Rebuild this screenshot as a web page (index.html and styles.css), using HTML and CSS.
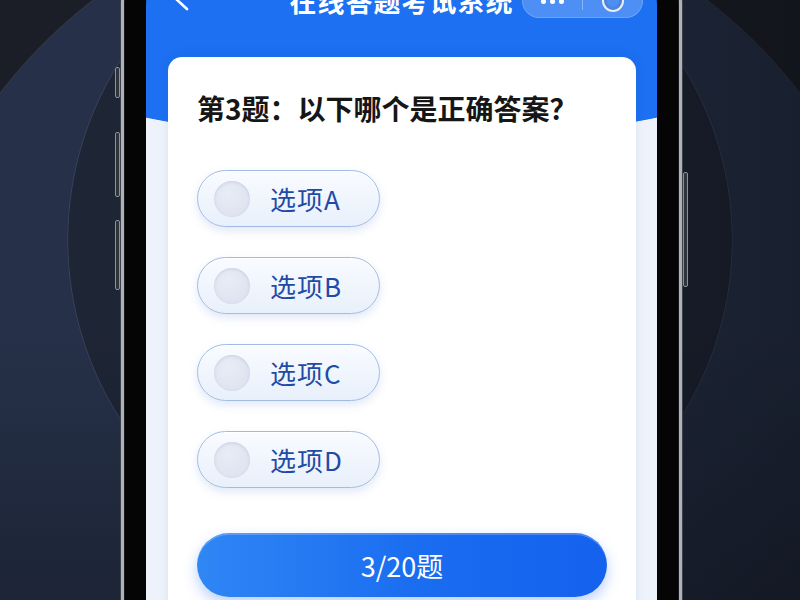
FILE: index.html
```html
<!DOCTYPE html>
<html lang="zh-CN">
<head>
<meta charset="utf-8">
<title>在线答题考试系统</title>
<link rel="stylesheet" href="styles.css">
</head>
<body>
  <div class="phone">
    <span class="key key-mute"></span>
    <span class="key key-vol-up"></span>
    <span class="key key-vol-down"></span>
    <span class="key key-power"></span>

    <div class="screen">
      <header class="nav">
        <button class="back" aria-label="返回">
          <svg width="18" height="26" viewBox="0 0 18 26" fill="none">
            <polyline points="15,2 3,13 15,24" stroke="#fff" stroke-width="2.6" stroke-linecap="round" stroke-linejoin="round"/>
          </svg>
        </button>
        <h1 class="title">在线答题考试系统</h1>
        <div class="capsule">
          <span class="capsule-dots"><i></i><i></i><i></i></span>
          <span class="capsule-sep"></span>
          <span class="capsule-close"><i></i></span>
        </div>
      </header>

      <main class="card">
        <h2 class="question">第3题：以下哪个是正确答案？</h2>
        <ul class="options">
          <li class="option"><span class="radio"></span><span class="label">选项A</span></li>
          <li class="option"><span class="radio"></span><span class="label">选项B</span></li>
          <li class="option"><span class="radio"></span><span class="label">选项C</span></li>
          <li class="option"><span class="radio"></span><span class="label">选项D</span></li>
        </ul>
        <button class="progress">3/20题</button>
      </main>
    </div>
  </div>
</body>
</html>
```
FILE: styles.css
```css
* {
  box-sizing: border-box;
}

html,
body {
  margin: 0;
  height: 600px;
  overflow: hidden;
}

body {
  font-family: "Noto Sans CJK SC", "Noto Sans", "Liberation Sans", sans-serif;
  background:
    linear-gradient(180deg, rgba(10, 12, 18, 0) 55%, rgba(10, 12, 18, 0.35) 100%),
    linear-gradient(90deg, rgba(8, 10, 14, 0) 25%, rgba(8, 10, 14, 0.45) 100%),
    radial-gradient(circle 333px at 400px 240px, #1e2535 99.5%, rgba(110, 130, 165, 0.22) 99.75%, rgba(0, 0, 0, 0) 100%),
    radial-gradient(circle 505px at 400px 400px, #263149 99.6%, rgba(110, 130, 165, 0.25) 99.8%, rgba(0, 0, 0, 0) 100%),
    #1b1e26;
}

/* device frame */
.phone {
  position: relative;
  width: 561px;
  height: 740px;
  margin: -60px 0 0 121px;
  padding: 20px 22px;
  background: #050506;
  border: 3px solid #aeb2b9;
  border-radius: 64px;
  box-shadow: 0 0 0 1px #3c4049, inset 0 0 0 1px #1a1b1e;
}

.key {
  position: absolute;
  width: 5px;
  background: #30343b;
  border: 1px solid #8c9199;
  border-radius: 2px;
}

.key-mute {
  left: -9px;
  top: 124px;
  height: 31px;
}

.key-vol-up {
  left: -9px;
  top: 189px;
  height: 65px;
}

.key-vol-down {
  left: -9px;
  top: 277px;
  height: 70px;
}

.key-power {
  right: -9px;
  top: 229px;
  height: 115px;
}

/* screen */
.screen {
  display: flex;
  flex-direction: column;
  height: 100%;
  overflow: hidden;
  border-radius: 42px 42px 0 0;
  background:
    radial-gradient(511px 179px at 50% 0, #1c70f1 99.6%, rgba(28, 112, 241, 0) 100%),
    #eef3fb;
}

/* navigation bar */
.nav {
  display: grid;
  grid-template-columns: 1fr auto 1fr;
  align-items: center;
  height: 42px;
  margin-top: 17px;
  padding: 0 14px;
}

.back {
  justify-self: start;
  align-self: start;
  width: 18px;
  height: 26px;
  margin: 5px 0 0 12px;
  padding: 0;
  border: 0;
  background: none;
}

.back svg {
  display: block;
}

.title {
  margin: 0;
  font-size: 27px;
  line-height: 42px;
  font-weight: 700;
  color: #fff;
  letter-spacing: 1px;
}

.capsule {
  justify-self: end;
  display: flex;
  align-items: center;
  width: 121px;
  height: 34px;
  border-radius: 17px;
  background: rgba(255, 255, 255, 0.22);
  border: 1px solid rgba(255, 255, 255, 0.18);
}

.capsule-dots {
  flex: 1;
  display: flex;
  justify-content: center;
  gap: 4px;
}

.capsule-dots i {
  width: 5px;
  height: 5px;
  border-radius: 50%;
  background: #fff;
}

.capsule-sep {
  width: 1px;
  height: 18px;
  background: rgba(255, 255, 255, 0.35);
}

.capsule-close {
  flex: 1;
  display: flex;
  justify-content: center;
}

.capsule-close i {
  width: 22px;
  height: 22px;
  border-radius: 50%;
  border: 2.5px solid #e8eef8;
  box-shadow: inset 0 0 0 3px rgba(80, 100, 140, 0.25);
}

/* question card */
.card {
  flex: 1;
  margin: 35px 21px 0 22px;
  padding: 34px 29px 0;
  background: #fff;
  border-radius: 14px 14px 0 0;
  box-shadow: 0 -2px 12px rgba(10, 50, 130, 0.08);
}

.question {
  margin: 0;
  font-size: 28px;
  line-height: 34px;
  font-weight: 600;
  color: #161616;
}

.options {
  display: flex;
  flex-direction: column;
  align-items: flex-start;
  gap: 30px;
  margin: 45px 0 0;
  padding: 0;
  list-style: none;
}

.option {
  display: flex;
  align-items: center;
  width: 183px;
  height: 57px;
  padding-left: 16px;
  border: 1.5px solid #a3bbe3;
  border-radius: 29px;
  background: linear-gradient(180deg, #f9fbff 0%, #e8f0fb 100%);
  box-shadow: 0 4px 10px rgba(60, 110, 200, 0.16), inset 0 1px 0 #fff;
}

.radio {
  width: 36px;
  height: 36px;
  border-radius: 50%;
  background: radial-gradient(circle at 40% 35%, #e8ecf5 0%, #dae0ee 100%);
  box-shadow: inset 0 1px 3px rgba(120, 140, 180, 0.25);
}

.label {
  margin-left: 20px;
  font-size: 26px;
  line-height: 1;
  letter-spacing: 1px;
  color: #1f4ba6;
}

.progress {
  display: block;
  width: 100%;
  height: 64px;
  margin-top: 45px;
  border: 0;
  border-radius: 32px;
  background: linear-gradient(90deg, #2f86f4 0%, #1a6cf0 55%, #1461ee 100%);
  box-shadow: 0 6px 14px rgba(30, 100, 240, 0.3), inset 0 2px 0 rgba(255, 255, 255, 0.22);
  font-family: inherit;
  font-size: 27px;
  color: #fff;
}
```
